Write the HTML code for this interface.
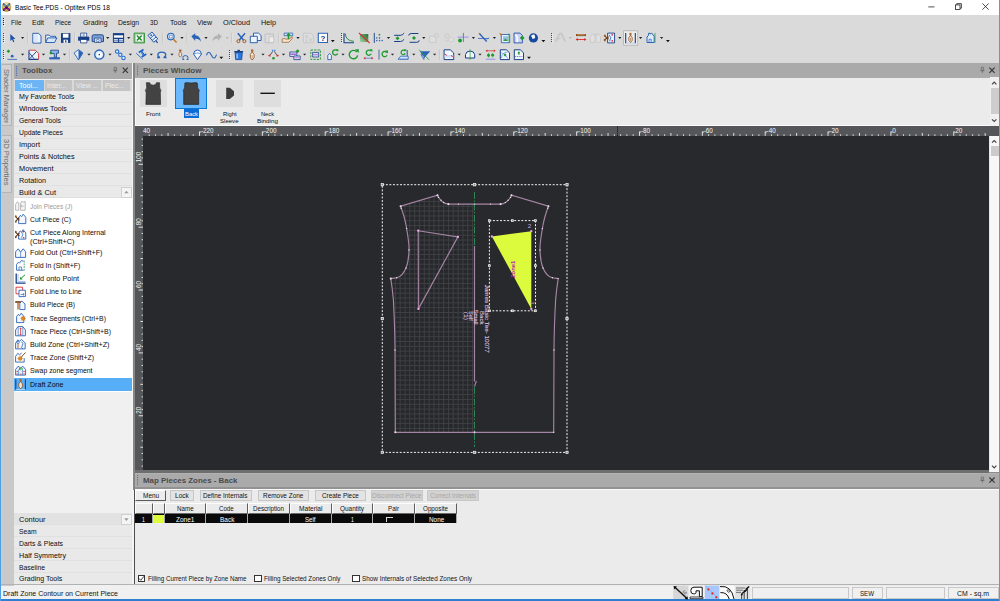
<!DOCTYPE html>
<html lang="en"><head><meta charset="utf-8"><title>Basic Tee.PDS - Optitex PDS 18</title>
<style>
html,body{margin:0;padding:0;background:#ebebeb;}
body{width:1000px;height:601px;position:relative;overflow:hidden;font-family:"Liberation Sans", sans-serif;}
#app{position:absolute;left:0;top:0;width:1000px;height:601px;overflow:hidden;}
#app div{position:absolute;box-sizing:border-box;}
#app span{position:absolute;white-space:nowrap;transform-origin:0 50%;}
#app svg{position:absolute;left:0;top:0;}
</style></head><body><div id="app">
<div style="left:0px;top:0px;width:1000px;height:601px;background:#ebebeb;"></div>
<div style="left:0px;top:0px;width:1000px;height:15px;background:#ffffff;"></div>
<div style="left:0px;top:14.8px;width:1000px;height:48.2px;background:#dadada;"></div>
<svg width="1000" height="601" viewBox="0 0 1000 601" style="pointer-events:none"><defs><radialGradient id="ag" cx="0.5" cy="0.3" r="0.7"><stop offset="0" stop-color="#fbf3d8"/><stop offset="0.55" stop-color="#d9bd6a"/><stop offset="1" stop-color="#a8862e"/></radialGradient></defs><circle cx="6.5" cy="7.05" r="4.8" fill="url(#ag)"/><path d="M3.6 4.2L9.4 10M9.4 4.2L3.6 10" stroke="#3a230f" stroke-width="1.9" stroke-linecap="round"/><path d="M4 4.6L6.3 6.9M9 4.6L6.7 6.9" stroke="#62b4e6" stroke-width="1.3" stroke-linecap="round"/><path d="M6.3 7.4L4 9.7M6.7 7.4L9 9.7" stroke="#a5189a" stroke-width="1.4" stroke-linecap="round"/><circle cx="6.5" cy="7.6" r="1.3" fill="#3a0a5e"/><path d="M928.3 6.9h6.2" stroke="#222" stroke-width="0.8"/><rect x="955.4" y="4.9" width="4.6" height="4.6" fill="none" stroke="#222" stroke-width="0.8"/><path d="M956.8 4.9v-1.3h4.6v4.6h-1.4" fill="none" stroke="#222" stroke-width="0.8"/><path d="M982.4 3.4l6.3 6.3m0-6.3l-6.3 6.3" stroke="#222" stroke-width="0.8"/></svg>
<svg width="1000" height="601" viewBox="0 0 1000 601" font-family="Liberation Sans, sans-serif"><path d="M3.5 33v9" stroke="#4a4a4a" stroke-width="1" stroke-dasharray="1 1"/><path d="M4.5 34v9" stroke="#f6f6f6" stroke-width="1" stroke-dasharray="1 1"/><g transform="translate(12.30 37.90)"><path d="M-2 -4 L-2 3.2 L-0.3 1.6 L1 4.3 L2.1 3.8 L0.9 1.2 L3.2 1.2Z" fill="#1f55a8" /></g><path d="M21.00 37.00h3.2l-1.6 1.9z" fill="#222"/><path d="M28.00 32.699999999999996v10.4" stroke="#a6a6a6" stroke-width="0.6"/><path d="M28.60 32.699999999999996v10.4" stroke="#f4f4f4" stroke-width="0.6"/><g transform="translate(36.80 37.90)"><path d="M-4 -4.6h5.6l2.6 2.4v7.4h-8.2z" fill="#eef4fd" stroke="#1f55a8" stroke-width="0.9" /><path d="M-3 -3.6h4v8h-4z" fill="#dbe8fb" /></g><g transform="translate(51.20 37.90)"><path d="M-5.5 4.6v-7.4h3.6l1 1.2h5.2v1.8" fill="#e9f1fd" stroke="#1f55a8" stroke-width="0.9" /><path d="M-5.5 4.6l2-4.6h9.2l-2.4 4.6z" fill="#d6e6fb" stroke="#1f55a8" stroke-width="0.9" /></g><g transform="translate(65.70 37.90)"><path d="M-4.7 -4.8h9.4v9.8h-9.4z" fill="#163f86" /><path d="M-2.8 -4.2h5.6v4h-5.6z" fill="#fff" /><path d="M-2.2 1.8h4.4v3.2h-4.4z" fill="#fff" /><path d="M-0.6 2.3h1.3v2.4h-1.3z" fill="#163f86" /></g><path d="M74.50 32.699999999999996v10.4" stroke="#a6a6a6" stroke-width="0.6"/><path d="M75.10 32.699999999999996v10.4" stroke="#f4f4f4" stroke-width="0.6"/><g transform="translate(83.70 37.90)"><path d="M-5.6 -1.2h11.2v4h-11.2z" fill="#163f86" /><path d="M-3 -4.8h6v3.8h-6z" fill="#fff" stroke="#163f86" stroke-width="0.8" /><path d="M-3.2 1.6h6.4v3.4h-6.4z" fill="#fff" stroke="#163f86" stroke-width="0.8" /><path d="M-1 -3.6h2M-1 -2.4h2" fill="none" stroke="#163f86" stroke-width="0.5" /><path d="M-5.6 -1.2L0 -5.2L5.6 -1.2" fill="none" stroke="#163f86" stroke-width="0.0" /></g><g transform="translate(97.80 37.90)"><path d="M-5.7 -1.5q0-1.6 1.6-1.6h8.2q1.6 0 1.6 1.6v5.2h-11.4z" fill="#7d9fd6" stroke="#163f86" stroke-width="0.9" /><path d="M-3.2 0.2h6.4v4.4h-6.4z" fill="#e8f0fc" stroke="#163f86" stroke-width="0.7" /><circle cx="0" cy="2.6" r="1.4" fill="none" stroke="#163f86" stroke-width="0.6"/></g><path d="M106.10 37.00h3.2l-1.6 1.9z" fill="#222"/><g transform="translate(118.50 37.90)"><path d="M-5.6 -4.8h11.2v9.8h-11.2z" fill="#163f86" /><path d="M-4.6 -2.6h9.2v2.4h-9.2z" fill="#fff" /><path d="M-4.6 1h4v2.8h-4zM0.6 1h4v2.8h-4z" fill="#dfe9fa" /><path d="M-4.6 2.4h4M0.6 2.4h4" fill="none" stroke="#163f86" stroke-width="0.6" /></g><path d="M127.10 37.00h3.2l-1.6 1.9z" fill="#222"/><g transform="translate(139.30 37.90)"><path d="M-5.2 -4.8h10.4v9.8h-10.4z" fill="#8fc98f" stroke="#2f8f3a" stroke-width="0.9" /><path d="M-3.6 -3.3h7.2v6.8h-7.2z" fill="#fff" /><path d="M-2.4 -2.4L2.4 2.6M2.4 -2.4L-2.4 2.6" fill="none" stroke="#1d8a2b" stroke-width="1.5" /></g><g transform="translate(153.50 37.90)"><g transform="rotate(-40)"><path d="M-2.6 -5.5h5.2v9h-5.2z" fill="#e6effc" stroke="#1f55a8" stroke-width="0.9" /><path d="M-2.6 -1.8h5.2M-2.6 1h5.2" fill="none" stroke="#1f55a8" stroke-width="0.8" /><circle cx="0" cy="-3.6" r="0.9" fill="#1f55a8"/><path d="M0 3.5v3" fill="none" stroke="#163f86" stroke-width="1" /></g></g><path d="M163.00 32.699999999999996v10.4" stroke="#a6a6a6" stroke-width="0.6"/><path d="M163.60 32.699999999999996v10.4" stroke="#f4f4f4" stroke-width="0.6"/><g transform="translate(172.00 37.90)"><circle cx="-1.2" cy="-1.3" r="3.3" fill="#d5e6fb" stroke="#2a63b8" stroke-width="1.1"/><path d="M-2.6 -2.6h2.8v2.6h-2.8z" fill="#fff" stroke="#1f55a8" stroke-width="0.5" /><path d="M1.4 1.3l3.2 3.3" fill="none" stroke="#c8781e" stroke-width="1.6" /></g><path d="M180.40 37.00h3.2l-1.6 1.9z" fill="#222"/><path d="M187.20 32.699999999999996v10.4" stroke="#a6a6a6" stroke-width="0.6"/><path d="M187.80 32.699999999999996v10.4" stroke="#f4f4f4" stroke-width="0.6"/><g transform="translate(196.20 37.90)"><path d="M-4.8 -1.6L-1 -4.6v2q5 0 5.8 6.6q-1.6-3.4-5.8-3.2v2.2z" fill="#2a63b8" /></g><path d="M204.40 37.00h3.2l-1.6 1.9z" fill="#222"/><g transform="translate(217.00 37.90)"><path d="M4.8 -1.6L1 -4.6v2q-5 0-5.8 6.6q1.6-3.4 5.8-3.2v2.2z" fill="#b4b4b4" /></g><path d="M225.60 37.00h3.2l-1.6 1.9z" fill="#b8b8b8"/><path d="M232.00 32.699999999999996v10.4" stroke="#a6a6a6" stroke-width="0.6"/><path d="M232.60 32.699999999999996v10.4" stroke="#f4f4f4" stroke-width="0.6"/><g transform="translate(241.40 37.90)"><path d="M-3.6 -4.6L2 2.2M3.6 -4.6L-2 2.2" fill="none" stroke="#2a63b8" stroke-width="1.5" /><circle cx="-3" cy="3.3" r="1.5" fill="none" stroke="#a5561a" stroke-width="1"/><circle cx="3" cy="3.3" r="1.5" fill="none" stroke="#a5561a" stroke-width="1"/></g><g transform="translate(255.70 37.90)"><path d="M-2.2 -4.8h5l2.6 2.4v5h-7.6z" fill="#eef4fd" stroke="#1f55a8" stroke-width="0.9" /><path d="M-5.4 -1.6h7v6.4h-7z" fill="#eef4fd" stroke="#1f55a8" stroke-width="0.9" /></g><g transform="translate(269.70 37.90)"><path d="M-4.6 -3.8h8.4v8.6h-8.4z" fill="#dcdcdc" stroke="#bdbdbd" stroke-width="0.9" /><path d="M-1.6 -4.8h2.6v1.6h-2.6z" fill="#c9c9c9" /><path d="M-0.6 -1.2h3.4l1.4 1.3v4.6h-4.8z" fill="#ececec" stroke="#bdbdbd" stroke-width="0.7" /></g><path d="M279.00 32.699999999999996v10.4" stroke="#a6a6a6" stroke-width="0.6"/><path d="M279.60 32.699999999999996v10.4" stroke="#f4f4f4" stroke-width="0.6"/><g transform="translate(287.50 37.90)"><path d="M-5.4 1.2q2-1.4 3.6 0h3.4l3-2.4v2l-3.2 3.6h-6.8z" fill="#f4e3cf" stroke="#9a6a3a" stroke-width="0.8" /><path d="M-3.4 -4.8h8.6v2.6h-8.6z" fill="#cfe2fb" stroke="#1f55a8" stroke-width="0.7" /><path d="M0.2 1.2v-3.6h-1.6l2.4-2.8l2.4 2.8h-1.6v3.6z" fill="#1c9a2e" /></g><path d="M296.40 37.00h3.2l-1.6 1.9z" fill="#222"/><g transform="translate(308.40 37.90)"><path d="M-5 -4.6h7.6l2.4 2.2v7.2h-10z" fill="#dedede" stroke="#c4c4c4" stroke-width="0.8" /><path d="M-3.4 -2.6h3.4v2.6h-3.4zM0.6 0.4h3v3h-3zM-3.4 1.4h2.4v2.4h-2.4z" fill="#cfcfcf" /></g><g transform="translate(322.90 37.90)"><path d="M-4.6 -4.6h9.2v9.2h-9.2z" fill="#fff" stroke="#2a63b8" stroke-width="1.1" /><text x="0" y="2.9" font-size="8" font-weight="700" text-anchor="middle" fill="#14387e">?</text></g><path d="M330.90 40.10h3.8l-1.9 2.1z" fill="#111"/><path d="M341.5 33v9" stroke="#4a4a4a" stroke-width="1" stroke-dasharray="1 1"/><path d="M342.5 34v9" stroke="#f6f6f6" stroke-width="1" stroke-dasharray="1 1"/><g transform="translate(349.00 37.90)"><path d="M-5 -4.6v9.4h10" fill="none" stroke="#163f86" stroke-width="1.1" /><path d="M-3.8 -4.4q0.6 7.4 8.6 7.8" fill="none" stroke="#2c8f4a" stroke-width="1" /></g><g transform="translate(364.30 37.90)"><defs><linearGradient id="rg1" x1="0" y1="1" x2="1" y2="0"><stop offset="0" stop-color="#a6d8a6"/><stop offset="1" stop-color="#1d6a2d"/></linearGradient></defs><path d="M-4.4 -3.8h8.4v8h-8.4z" fill="url(#rg1)" /><path d="M-5.4 -5L5.4 5.2" fill="none" stroke="#d92b2b" stroke-width="1.2" /></g><g transform="translate(378.50 37.90)"><path d="M-4.2 -5v10" fill="none" stroke="#163f86" stroke-width="0.9" /><rect x="-2.4" y="-0.6" width="1.3" height="1.3" fill="#2a63b8"/><rect x="-2.4" y="2" width="1.3" height="1.3" fill="#2a63b8"/><rect x="0.4" y="-0.6" width="1.3" height="1.3" fill="#2a63b8"/><rect x="0.4" y="2" width="1.3" height="1.3" fill="#2a63b8"/><rect x="3" y="2" width="1.3" height="1.3" fill="#2a63b8"/><rect x="0.1" y="-4" width="1.6" height="1.6" fill="#1c9a2e"/></g><path d="M386.90 37.00h3.2l-1.6 1.9z" fill="#222"/><g transform="translate(399.50 37.90)"><path d="M-5.4 -2.6h6.4q2 0 3.6-2.2 M-5.4 3.6h6.4q2 0 3.6-2.2" fill="none" stroke="#163f86" stroke-width="1" /><path d="M-2 -1.6l2 2l-2 2l-2-2z" fill="#1c9a2e" /></g><g transform="translate(414.00 37.90)"><path d="M-5.2 -2.4q0-2 2.4-2h7.2 M5.2 2.4q0 2-2.4 2h-7.2" fill="none" stroke="#163f86" stroke-width="1" /><path d="M0 -2l2 2l-2 2l-2-2z" fill="#1c9a2e" /></g><path d="M422.20 37.00h3.2l-1.6 1.9z" fill="#222"/><g transform="translate(434.00 37.90)"><path d="M-4.6 -1.6h5l1.6 1.6v4.6h-6.6z" fill="#dedede" stroke="#c6c6c6" stroke-width="0.8" /><circle cx="2.6" cy="-2.6" r="2" fill="none" stroke="#c6c6c6" stroke-width="0.8"/></g><g transform="translate(448.50 37.90)"><circle cx="-1.4" cy="-2" r="2.2" fill="none" stroke="#c6c6c6" stroke-width="0.8"/><circle cx="2.8" cy="1.8" r="2.2" fill="#e2e2e2" stroke="#c6c6c6" stroke-width="0.8"/><path d="M-3.4 2l1.6 2l1.6-2" fill="none" stroke="#c6c6c6" stroke-width="0.8" /></g><g transform="translate(463.00 37.90)"><path d="M-5.4 -0.8h11" fill="none" stroke="#9a8ff0" stroke-width="1" /><path d="M0.4 -5v9" fill="none" stroke="#2f9a5c" stroke-width="0.9" /><circle cx="-3" cy="2.6" r="1.9" fill="#1c9a2e"/></g><path d="M471.80 37.00h3.2l-1.6 1.9z" fill="#222"/><g transform="translate(483.70 37.90)"><path d="M-5.6 0.6h11" fill="none" stroke="#2a63b8" stroke-width="0.8" /><path d="M-4.6 -4.6L3 3.6" fill="none" stroke="#2a63b8" stroke-width="1.3" /><path d="M-5.2 -5l2.2 0.4l-1.4 1.6z" fill="#c8781e" /><path d="M2 2.6l3.2-3" fill="none" stroke="#2a63b8" stroke-width="0.7" stroke-dasharray="1 0.8"/></g><path d="M492.80 37.00h3.2l-1.6 1.9z" fill="#222"/><g transform="translate(504.70 37.90)"><path d="M-3.4 -3.4h8.4v8.2h-8.4z" fill="#e8f0fc" stroke="#1f55a8" stroke-width="0.8" /><path d="M-1.6 -1.6h5v4.6h-5z" fill="#8fc0e8" /><path d="M-1.6 3l2.2-2.4l2.8 2.4z" fill="#3a9a4a" /><path d="M-5.6 -5l3.2 1l-1.8 1.6z" fill="#c8781e" /><path d="M4.2 -4.6v9.4" fill="none" stroke="#2f9a5c" stroke-width="0.7" /></g><g transform="translate(519.00 37.90)"><path d="M-5 -4.8h6l2.4 2.4v7.4h-8.4z" fill="#cfcff6" stroke="#1f55a8" stroke-width="0.9" /><path d="M-3.6 -3.4q3 3 1.6 7.6" fill="none" stroke="#fff" stroke-width="1.6" /><path d="M3.2 -2.4l2.4 2.4l-2.4 2.4l-2.4-2.4z" fill="#1c9a2e" /></g><g transform="translate(533.40 37.90)"><circle cx="0" cy="0" r="4.6" fill="#174a9e"/><path d="M-2.6 -1.6q1.6-2.6 4-1.6q-0.6 1.6 0.6 2.2q-1 2.4-3.2 1.8q0.4-2-1.4-2.4z" fill="#fff" /></g><path d="M541.50 40.10h3.8l-1.9 2.1z" fill="#111"/><path d="M551.5 33v9" stroke="#4a4a4a" stroke-width="1" stroke-dasharray="1 1"/><path d="M552.5 34v9" stroke="#f6f6f6" stroke-width="1" stroke-dasharray="1 1"/><g transform="translate(560.30 37.90)"><path d="M-4.8 3.6L-0.6 -4.4h1.6l4 8" fill="none" stroke="#c4c4c4" stroke-width="1.6" /><path d="M-2.6 1.4l2.8-1.4" fill="none" stroke="#c4c4c4" stroke-width="1.2" /></g><path d="M568.70 37.00h3.2l-1.6 1.9z" fill="#b8b8b8"/><g transform="translate(581.00 37.90)"><path d="M-5 -2.8h10" fill="none" stroke="#8a4a16" stroke-width="2" /><path d="M-3.8 -3h7.6" fill="none" stroke="#e9c9a0" stroke-width="0.6" /><path d="M-5 1.6h10" fill="none" stroke="#d92b2b" stroke-width="0.9" /><path d="M-5.4 1.6l2.2-1.5v3zM5.4 1.6l-2.2-1.5v3z" fill="#d92b2b" /></g><g transform="translate(595.30 37.90)"><path d="M-5 4.4v-5.6l2.2-3l1.2 1.6l1.2-1.6v8.6z M0.8 4.4v-8.6l1.2 1.6l1.2-1.6l2 3v5.6z" fill="#e0e0e0" stroke="#c6c6c6" stroke-width="0.7" /></g><g transform="translate(609.60 37.90)"><path d="M-2 -4.8h7v9.8h-7z" fill="#e8f0fc" stroke="#163f86" stroke-width="0.9" /><path d="M-0.4 -3q3 2.6 0.4 6.4" fill="none" stroke="#2a63b8" stroke-width="0.8" /><circle cx="2.6" cy="-3" r="0.8" fill="#d92b2b"/><circle cx="2.6" cy="3" r="0.8" fill="#d92b2b"/><path d="M-5.6 -2.4L-1 1.2M-5.6 2.4L-1 -1.2" fill="none" stroke="#7a3e10" stroke-width="1.1" /><circle cx="-4.8" cy="-2.6" r="0.9" fill="#a5561a"/><circle cx="-4.8" cy="2.6" r="0.9" fill="#a5561a"/></g><path d="M618.20 37.00h3.2l-1.6 1.9z" fill="#222"/><g transform="translate(630.50 37.90)"><path d="M-7 -7.2h14.2v14.6h-14.2z" fill="#ececec" stroke="#a9a9a9" stroke-width="0.7" /><path d="M-4.8 -5v10.4M4.8 -5v10.4" fill="none" stroke="#163f86" stroke-width="1.1" /><path d="M-4.8 5.2h9.6" fill="none" stroke="#9fb4d8" stroke-width="0.6" /><path d="M-1 -5h2v2.4h-2z" fill="#b0651c" /><path d="M0 -2.6q2.6 2.2 1.6 5.4l-1.6 1.8l-1.6-1.8q-1-3.2 1.6-5.4z" fill="#f6ead8" stroke="#8a4a16" stroke-width="0.8" /><path d="M0 0v3" fill="none" stroke="#8a4a16" stroke-width="0.5" /></g><path d="M639.00 37.00h3.2l-1.6 1.9z" fill="#222"/><g transform="translate(651.00 37.90)"><path d="M-4 4.6v-5.4l1.6-2v-1.8h1.4v0.8l1.6-1l2.6 3.2v6.2z" fill="#dfeafc" stroke="#2a63b8" stroke-width="1" /><path d="M-2 4.4v-3h2.2v3" fill="none" stroke="#2a63b8" stroke-width="0.7" /><path d="M4 -5v10" fill="none" stroke="#2f9a5c" stroke-width="0.8" /></g><path d="M660.00 37.00h3.2l-1.6 1.9z" fill="#222"/><path d="M666.00 40.10h3.8l-1.9 2.1z" fill="#111"/><path d="M3.5 50v9" stroke="#4a4a4a" stroke-width="1" stroke-dasharray="1 1"/><path d="M4.5 51v9" stroke="#f6f6f6" stroke-width="1" stroke-dasharray="1 1"/><g transform="translate(12.00 54.60)"><path d="M-3.6 -5.2l1.8 1.8l-1.8 1.8l-1.8-1.8z" fill="#1c9a2e" /><circle cx="0.2" cy="1.6" r="1.4" fill="#2a63b8"/><path d="M-4.6 4.8h9.6" fill="none" stroke="#2a63b8" stroke-width="0.8" /></g><path d="M21.00 53.70h3.2l-1.6 1.9z" fill="#222"/><g transform="translate(33.80 54.60)"><path d="M-4.8 -4.4h6.2l3.4 3.2v6h-9.6z" fill="#eef3fb" /><path d="M-4.8 -4.4v9.2h9.6" fill="none" stroke="#163f86" stroke-width="1.1" /><path d="M-4.8 -4.4h6.2l3.4 3.2v6" fill="none" stroke="#e04040" stroke-width="1" /><path d="M-4 4L2.6 -3M-4.4 -1.6l4.6 5.6" fill="none" stroke="#163f86" stroke-width="0.9" /></g><path d="M41.90 53.70h3.2l-1.6 1.9z" fill="#222"/><g transform="translate(54.50 54.60)"><path d="M-5.2 2.6h10.6v2.2h-10.6z" fill="#2a63b8" /><path d="M-3.8 -4.4h7.8v3h-2v4h-2.2v-3.6h-3.6z" fill="#8fb4ea" stroke="#163f86" stroke-width="0.8" /><path d="M-3.6 -3.4l1.7 1.7l-1.7 1.7l-1.7-1.7z" fill="#1c9a2e" /></g><path d="M62.90 53.70h3.2l-1.6 1.9z" fill="#222"/><path d="M69.50 49.4v10.4" stroke="#a6a6a6" stroke-width="0.6"/><path d="M70.10 49.4v10.4" stroke="#f4f4f4" stroke-width="0.6"/><g transform="translate(78.50 54.60)"><path d="M0 -5l4.4 3.4l-4.4 7l-4.4-7z" fill="#e3eefc" stroke="#2a63b8" stroke-width="0.9" /><path d="M0 -5l4.4 3.4l-4.4 7z" fill="#2a63b8" /></g><path d="M87.40 53.70h3.2l-1.6 1.9z" fill="#222"/><g transform="translate(99.30 54.60)"><circle cx="0" cy="0" r="4.6" fill="#dcebfd" stroke="#2a63b8" stroke-width="1.3"/><circle cx="0" cy="0" r="2.6" fill="#fff"/><rect x="-0.7" y="-0.7" width="1.4" height="1.4" fill="#174a9e"/></g><path d="M108.40 53.70h3.2l-1.6 1.9z" fill="#222"/><g transform="translate(120.30 54.60)"><circle cx="-3.2" cy="-3" r="1.7" fill="#e9f1fd" stroke="#2a6fd0" stroke-width="1.1"/><circle cx="0" cy="0.2" r="1.7" fill="#e9f1fd" stroke="#2a6fd0" stroke-width="1.1"/><circle cx="3.2" cy="3.4" r="1.7" fill="#e9f1fd" stroke="#2a6fd0" stroke-width="1.1"/></g><path d="M128.80 53.70h3.2l-1.6 1.9z" fill="#222"/><g transform="translate(141.00 54.60)"><path d="M-4.8 -1.4L1.6 4.6" fill="none" stroke="#2a63b8" stroke-width="0.9" /><g transform="translate(1.6 -1.2) rotate(-32)"><path d="M-2.8 -3.6h5.6v1.7h-1.7v3.6h1.7v1.7h-5.6v-1.7h1.7v-3.6h-1.7z" fill="#1f63c8" /><path d="M-0.3 -1.8v3.4" fill="none" stroke="#7fb2f0" stroke-width="0.6" /></g></g><path d="M149.70 53.70h3.2l-1.6 1.9z" fill="#222"/><g transform="translate(161.80 54.60)"><path d="M-4.8 2.9h3q-2.4-1.1-2.2-3q0.4-2.4 4-2.4q3.6 0 4 2.4q0.2 1.9-2.2 3h3" fill="none" stroke="#2a63b8" stroke-width="1.3" /></g><path d="M170.40 53.70h3.2l-1.6 1.9z" fill="#222"/><g transform="translate(182.80 54.60)"><path d="M-3.6 -5h2.2v2h-2.2z" fill="#a5561a" /><path d="M-2.5 -3q2 1.8 1.2 4.2l-1.2 1.4l-1.2-1.4q-0.8-2.4 1.2-4.2z" fill="#f6ead8" stroke="#8a4a16" stroke-width="0.7" /><path d="M-0.6 4.8h1.8q-1.4-1-1.2-2.2q0.2-1.6 2.6-1.6q2.4 0 2.6 1.6q0.2 1.2-1.2 2.2h1.8" fill="none" stroke="#2a63b8" stroke-width="1" /></g><g transform="translate(197.50 54.60)"><path d="M0 5l-4-5.6q0.6-4 4-4q3.4 0 4 4z" fill="#f2f6fd" stroke="#2a63b8" stroke-width="1" /><path d="M-4 -0.6q4-2.2 8 0" fill="none" stroke="#2a63b8" stroke-width="0.6" /></g><g transform="translate(211.60 54.60)"><path d="M-5.2 0.6q2.2-6 5 0q2.8 6 5.2-0.6" fill="none" stroke="#2a63b8" stroke-width="1.1" /></g><path d="M219.40 56.80h3.8l-1.9 2.1z" fill="#111"/><path d="M229.5 50v9" stroke="#4a4a4a" stroke-width="1" stroke-dasharray="1 1"/><path d="M230.5 51v9" stroke="#f6f6f6" stroke-width="1" stroke-dasharray="1 1"/><g transform="translate(238.70 54.60)"><path d="M-3.6 -2.2h7.2l-0.6 7.2h-6z" fill="#2a78e0" stroke="#163f86" stroke-width="0.8" /><path d="M-4.4 -3.6h8.8v1.4h-8.8z" fill="#163f86" /><path d="M-1.2 -4.8h2.4v1.2h-2.4z" fill="#163f86" /><path d="M-1.6 -0.8v4.6" fill="none" stroke="#bcd8fb" stroke-width="1.2" /></g><g transform="translate(252.20 54.60)"><path d="M-1.1 -5.2h2.2v2.4h-2.2z" fill="#b0651c" /><path d="M0 -2.8q3 2.4 1.8 6l-1.8 2.2l-1.8-2.2q-1.2-3.6 1.8-6z" fill="#f6ead8" stroke="#8a4a16" stroke-width="0.8" /><path d="M0 0.4v3.4" fill="none" stroke="#8a4a16" stroke-width="0.5" /></g><path d="M261.40 53.70h3.2l-1.6 1.9z" fill="#222"/><g transform="translate(273.50 54.60)"><path d="M-1.6 -4.8h1.4v1.4h-1.4zM0.6 -4.8h1.4v1.4h-1.4z" fill="#4a86e8" /><path d="M-0.8 -3.2L-3.6 1M0.8 -3.2L3.6 1" fill="none" stroke="#222" stroke-width="0.7" /><path d="M-5.6 1l2.4-1.4v2.8zM5.6 1l-2.4-1.4v2.8z" fill="#e03030" /><circle cx="0" cy="3.6" r="1.3" fill="#1c9a2e"/></g><path d="M281.90 53.70h3.2l-1.6 1.9z" fill="#222"/><g transform="translate(295.00 54.60)"><path d="M-5.2 -2.6h7v4.4h-7z" fill="#e8f0fc" stroke="#163f86" stroke-width="0.8" /><path d="M-5 -1.2h6.6v1.6h-6.6z" fill="#a070d8" /><path d="M-1.2 1.4h6.4v3.6h-6.4z" fill="#e8f0fc" stroke="#163f86" stroke-width="0.8" /><path d="M-1 2.4h6v1.4h-6z" fill="#c89ae8" /><path d="M2.6 -5.4l1.9 1.9l-1.9 1.9l-1.9-1.9z" fill="#1c9a2e" /></g><path d="M303.00 53.70h3.2l-1.6 1.9z" fill="#222"/><g transform="translate(315.60 54.60)"><path d="M-4.8 -4.6h9.6v9.4h-9.6z" fill="none" stroke="#2c9a3a" stroke-width="1" stroke-dasharray="2.2 1.2"/><path d="M-3 -2.2h6v4.6h-6z" fill="#e8f0fc" stroke="#163f86" stroke-width="0.8" /><path d="M-2.8 -0.8h5.6v1.6h-5.6z" fill="#b08ae0" /></g><path d="M324.40 49.4v10.4" stroke="#a6a6a6" stroke-width="0.6"/><path d="M325.00 49.4v10.4" stroke="#f4f4f4" stroke-width="0.6"/><g transform="translate(332.80 54.60)"><path d="M-5 5v-4.2l1.8-2l1.8 2v4.2z" fill="#eef3fb" stroke="#2a63b8" stroke-width="0.9" /><path d="M4.6 -3.6a2.6 2.6 0 1 0 0.2 2.4" fill="none" stroke="#1c9a2e" stroke-width="1.3" /><path d="M3 -5.4h2.6v2.6z" fill="#1c9a2e" /></g><path d="M341.40 53.70h3.2l-1.6 1.9z" fill="#222"/><g transform="translate(353.40 54.60)"><path d="M3.4 -2.6a4.2 4.2 0 1 0 0.8 3.4" fill="none" stroke="#1c9a2e" stroke-width="1.4" /><path d="M1.6 -5.4h3.8v3.8z" fill="#1c9a2e" /></g><g transform="translate(368.40 54.60)"><path d="M2.6 -3.4a2.6 2.6 0 1 0 0.2 2.6" fill="none" stroke="#1c9a2e" stroke-width="1.3" /><path d="M1.2 -5.4h2.8v2.8z" fill="#1c9a2e" /><path d="M-4.2 3.6h8.4" fill="none" stroke="#6a8fd8" stroke-width="1" /><path d="M-5 3.6l2-1.4v2.8zM5 3.6l-2-1.4v2.8z" fill="#e03030" /></g><g transform="translate(383.00 54.60)"><path d="M-4 -5v10" fill="none" stroke="#4a6aa8" stroke-width="1" /><path d="M3.8 -2a2.6 2.6 0 1 0 0.2 2.6" fill="none" stroke="#1c9a2e" stroke-width="1.3" /><path d="M2.2 -4h2.8v2.8z" fill="#1c9a2e" /></g><path d="M390.90 53.70h3.2l-1.6 1.9z" fill="#222"/><g transform="translate(403.40 54.60)"><path d="M-5.2 4.6l2.4-3h7.6v3z" fill="#cfe2fb" stroke="#2a63b8" stroke-width="0.8" /><path d="M3.8 -4.6v6" fill="none" stroke="#2a63b8" stroke-width="1.1" /><path d="M1.6 -3.6a2.2 2.2 0 1 0 0.2 2.4" fill="none" stroke="#1c9a2e" stroke-width="1.2" /><path d="M0.4 -5.4h2.4v2.4z" fill="#1c9a2e" /><path d="M-5.2 4.8h10" fill="none" stroke="#2a63b8" stroke-width="0.6" stroke-dasharray="1 0.8"/></g><path d="M412.20 53.70h3.2l-1.6 1.9z" fill="#222"/><g transform="translate(424.50 54.60)"><path d="M-4.6 -3.4h10.4L-0.6 3.6z" fill="#2a63b8" /><path d="M-3.6 0L-0.6 5l0.2-4z" fill="#8fc0f0" stroke="#1f55a8" stroke-width="0.6" /><path d="M-5.4 -4.8L4.6 5.2" fill="none" stroke="#2c9a3a" stroke-width="0.9" /></g><path d="M433.00 53.70h3.2l-1.6 1.9z" fill="#222"/><path d="M440.00 49.4v10.4" stroke="#a6a6a6" stroke-width="0.6"/><path d="M440.60 49.4v10.4" stroke="#f4f4f4" stroke-width="0.6"/><g transform="translate(448.90 54.60)"><path d="M-4.8 -4.8h6.2l3.4 3.2v6.6h-9.6z" fill="#f4f8fe" stroke="#163f86" stroke-width="1" /><path d="M-4.4 0.4h8.8v2.6h-8.8z" fill="#cfe2fb" /><path d="M-4 -0.4l2 1.2M4 2l-2-1.2" fill="none" stroke="#e03030" stroke-width="1" /></g><path d="M457.60 53.70h3.2l-1.6 1.9z" fill="#222"/><g transform="translate(470.10 54.60)"><path d="M-4.6 3.4v-3.4q0.6-3.4 4.6-3.6q4 0.2 4.6 3.6v3.4z" fill="#f2f6fd" stroke="#163f86" stroke-width="1" /><path d="M0 -5.4v10.6" fill="none" stroke="#2c9a3a" stroke-width="0.7" /></g><path d="M478.40 53.70h3.2l-1.6 1.9z" fill="#222"/><g transform="translate(490.60 54.60)"><path d="M-4.6 -3.8h9.2" fill="none" stroke="#d92b2b" stroke-width="0.7" /><path d="M-5 -3.8l1.8-1.2v2.4zM5 -3.8l-1.8-1.2v2.4z" fill="#d92b2b" /><path d="M-4.8 4.6h9.6" fill="none" stroke="#9a8ff0" stroke-width="1" /><path d="M-3.8 0.6l2-2.6v1.6h1.2v2.2h-1.2v1.6zM3.8 0.6l-2 2.6v-1.6h-1.2v-2.2h1.2v-1.6z" fill="#1c9a2e" /></g><g transform="translate(504.90 54.60)"><path d="M-4.6 -4.8h6l3.2 3v6.8h-9.2z" fill="#f4f8fe" stroke="#163f86" stroke-width="1" /><path d="M-3.4 3.4q0.4-5.6 6-6" fill="none" stroke="#6a9ae0" stroke-width="0.8" /><path d="M-3.6 -2q4.6 1 6.4 6" fill="none" stroke="#6a9ae0" stroke-width="0.8" /><path d="M0.2 -1.4l1.4 1.8l-1.4 1.8l-1.4-1.8z" fill="#1c9a2e" /></g><g transform="translate(518.90 54.60)"><path d="M-4.6 -4.8h6l3.2 3v6.8h-9.2z" fill="#f4f8fe" stroke="#163f86" stroke-width="1" /><path d="M-3.8 2h7.6" fill="none" stroke="#163f86" stroke-width="0.7" stroke-dasharray="1 0.8"/><path d="M0 -3.4l1.6 2h-1v1.6h-1.2v-1.6h-1z" fill="#1c9a2e" /></g><path d="M527.10 56.80h3.8l-1.9 2.1z" fill="#111"/></svg>
<div style="left:0px;top:63px;width:14px;height:523px;background:#c9c9c9;"></div>
<div style="left:1.5px;top:64.2px;width:10px;height:62.2px;background:#d2d2d2;border:0.5px solid #b4b4b4;border-left:none;"></div>
<div style="left:1.5px;top:134.9px;width:10px;height:58.2px;background:#d2d2d2;border:0.5px solid #b4b4b4;border-left:none;"></div>
<div style="left:14px;top:63px;width:118.5px;height:523px;background:#f0f0f0;"></div>
<div style="left:14px;top:62.8px;width:118.2px;height:16.4px;background:#aaaaaa;"></div>
<div style="left:14px;top:79.5px;width:118.5px;height:11.5px;background:#d9d9d9;"></div>
<div style="left:15px;top:80px;width:28.5px;height:10.5px;background:#6cb4f4;"></div>
<div style="left:44.6px;top:80px;width:27.4px;height:10.5px;background:#c4c4c4;"></div>
<div style="left:73.6px;top:80px;width:27.400000000000006px;height:10.5px;background:#c4c4c4;"></div>
<div style="left:102.6px;top:80px;width:27.400000000000006px;height:10.5px;background:#c4c4c4;"></div>
<div style="left:14px;top:91.0px;width:118.5px;height:11.9px;background:#e9e9e9;border-bottom:1px solid #e0e0e0;"></div>
<div style="left:14px;top:102.9px;width:118.5px;height:11.9px;background:#e9e9e9;border-bottom:1px solid #e0e0e0;"></div>
<div style="left:14px;top:114.8px;width:118.5px;height:11.9px;background:#e9e9e9;border-bottom:1px solid #e0e0e0;"></div>
<div style="left:14px;top:126.7px;width:118.5px;height:11.9px;background:#e9e9e9;border-bottom:1px solid #e0e0e0;"></div>
<div style="left:14px;top:138.6px;width:118.5px;height:11.9px;background:#e9e9e9;border-bottom:1px solid #e0e0e0;"></div>
<div style="left:14px;top:150.5px;width:118.5px;height:11.9px;background:#e9e9e9;border-bottom:1px solid #e0e0e0;"></div>
<div style="left:14px;top:162.4px;width:118.5px;height:11.9px;background:#e9e9e9;border-bottom:1px solid #e0e0e0;"></div>
<div style="left:14px;top:174.3px;width:118.5px;height:11.9px;background:#e9e9e9;border-bottom:1px solid #e0e0e0;"></div>
<div style="left:14px;top:186.2px;width:118.5px;height:11.9px;background:#e9e9e9;border-bottom:1px solid #e0e0e0;"></div>
<div style="left:120.5px;top:186.5px;width:11.5px;height:11px;background:#f4f4f4;border:0.5px solid #d0d0d0;"></div>
<div style="left:14px;top:198px;width:118.5px;height:194px;background:#ffffff;"></div>
<div style="left:14px;top:378px;width:118.3px;height:12.6px;background:#55aef6;"></div>
<div style="left:14px;top:513.3px;width:118.5px;height:11.95px;background:#e2e2e2;border-bottom:1px solid #e0e0e0;"></div>
<div style="left:14px;top:525.25px;width:118.5px;height:11.95px;background:#e9e9e9;border-bottom:1px solid #e0e0e0;"></div>
<div style="left:14px;top:537.1999999999999px;width:118.5px;height:11.95px;background:#e9e9e9;border-bottom:1px solid #e0e0e0;"></div>
<div style="left:14px;top:549.15px;width:118.5px;height:11.95px;background:#e9e9e9;border-bottom:1px solid #e0e0e0;"></div>
<div style="left:14px;top:561.0999999999999px;width:118.5px;height:11.95px;background:#e9e9e9;border-bottom:1px solid #e0e0e0;"></div>
<div style="left:14px;top:573.05px;width:118.5px;height:11.95px;background:#e9e9e9;border-bottom:1px solid #e0e0e0;"></div>
<div style="left:120.5px;top:513.8px;width:11.5px;height:11px;background:#f4f4f4;border:0.5px solid #d0d0d0;"></div>
<div style="left:132.2px;top:63px;width:1.2px;height:522px;background:#f6f6f6;"></div>
<div style="left:133.3px;top:63px;width:1.5px;height:522px;background:#858585;"></div>
<div style="left:134.8px;top:62.8px;width:865.2px;height:15.2px;background:#aaaaaa;"></div>
<div style="left:134.8px;top:78px;width:865.2px;height:48.2px;background:#ebebeb;"></div>
<div style="left:134.8px;top:78px;width:1px;height:48.2px;background:#f8f8f8;"></div>
<div style="left:134.8px;top:125.3px;width:865.2px;height:0.9px;background:#fbfbfb;"></div>
<div style="left:139.6px;top:80px;width:27.4px;height:26.8px;background:#dedede;"></div>
<div style="left:175.1px;top:78px;width:32px;height:31.4px;background:#6ab8fe;border:1.1px solid #0a78d7;"></div>
<div style="left:216px;top:80px;width:27.2px;height:26.8px;background:#dedede;"></div>
<div style="left:254px;top:80px;width:27.2px;height:26.8px;background:#dedede;"></div>
<div style="left:184px;top:109.3px;width:15px;height:8.8px;background:#0c6cd6;"></div>
<div style="left:989.5px;top:77.3px;width:10.5px;height:49px;background:#f0f0f0;"></div>
<div style="left:990.5px;top:88px;width:8.5px;height:25.5px;background:#cdcdcd;"></div>
<div style="left:134.7px;top:126px;width:865.3px;height:344.3px;background:#28292c;"></div>
<div style="left:134.7px;top:126.2px;width:865px;height:10px;background:#55565a;"></div>
<div style="left:134.7px;top:126px;width:8.6px;height:344.5px;background:#55565a;"></div>
<div style="left:988.8px;top:136.2px;width:10.4px;height:335.4px;background:#f7f7f7;"></div>
<div style="left:988.8px;top:136.2px;width:1.3px;height:335.4px;background:#e6e6e6;"></div>
<div style="left:990.8px;top:146.4px;width:7.8px;height:9.3px;background:#cbcbcb;"></div>
<svg width="1000" height="601" viewBox="0 0 1000 601" font-family="Liberation Sans, sans-serif"><path d="M149.22 134.3V135.9M155.50 134.3V135.9M161.79 134.3V135.9M168.07 133V135.9M174.36 134.3V135.9M180.65 134.3V135.9M186.93 134.3V135.9M193.22 134.3V135.9M199.50 131.6V135.9 M199.50 132h1.7M205.79 134.3V135.9M212.07 134.3V135.9M218.36 134.3V135.9M224.64 134.3V135.9M230.93 133V135.9M237.21 134.3V135.9M243.50 134.3V135.9M249.79 134.3V135.9M256.07 134.3V135.9M262.36 131.6V135.9 M262.36 132h1.7M268.64 134.3V135.9M274.93 134.3V135.9M281.21 134.3V135.9M287.50 134.3V135.9M293.78 133V135.9M300.07 134.3V135.9M306.35 134.3V135.9M312.64 134.3V135.9M318.92 134.3V135.9M325.21 131.6V135.9 M325.21 132h1.7M331.50 134.3V135.9M337.78 134.3V135.9M344.07 134.3V135.9M350.35 134.3V135.9M356.64 133V135.9M362.92 134.3V135.9M369.21 134.3V135.9M375.49 134.3V135.9M381.78 134.3V135.9M388.06 131.6V135.9 M388.06 132h1.7M394.35 134.3V135.9M400.63 134.3V135.9M406.92 134.3V135.9M413.21 134.3V135.9M419.49 133V135.9M425.78 134.3V135.9M432.06 134.3V135.9M438.35 134.3V135.9M444.63 134.3V135.9M450.92 131.6V135.9 M450.92 132h1.7M457.20 134.3V135.9M463.49 134.3V135.9M469.77 134.3V135.9M476.06 134.3V135.9M482.34 133V135.9M488.63 134.3V135.9M494.92 134.3V135.9M501.20 134.3V135.9M507.49 134.3V135.9M513.77 131.6V135.9 M513.77 132h1.7M520.06 134.3V135.9M526.34 134.3V135.9M532.63 134.3V135.9M538.91 134.3V135.9M545.20 133V135.9M551.48 134.3V135.9M557.77 134.3V135.9M564.06 134.3V135.9M570.34 134.3V135.9M576.63 131.6V135.9 M576.63 132h1.7M582.91 134.3V135.9M589.20 134.3V135.9M595.48 134.3V135.9M601.77 134.3V135.9M608.05 133V135.9M614.34 134.3V135.9M620.62 134.3V135.9M626.91 134.3V135.9M633.19 134.3V135.9M639.48 131.6V135.9 M639.48 132h1.7M645.77 134.3V135.9M652.05 134.3V135.9M658.34 134.3V135.9M664.62 134.3V135.9M670.91 133V135.9M677.19 134.3V135.9M683.48 134.3V135.9M689.76 134.3V135.9M696.05 134.3V135.9M702.33 131.6V135.9 M702.33 132h1.7M708.62 134.3V135.9M714.90 134.3V135.9M721.19 134.3V135.9M727.48 134.3V135.9M733.76 133V135.9M740.05 134.3V135.9M746.33 134.3V135.9M752.62 134.3V135.9M758.90 134.3V135.9M765.19 131.6V135.9 M765.19 132h1.7M771.47 134.3V135.9M777.76 134.3V135.9M784.04 134.3V135.9M790.33 134.3V135.9M796.62 133V135.9M802.90 134.3V135.9M809.19 134.3V135.9M815.47 134.3V135.9M821.76 134.3V135.9M828.04 131.6V135.9 M828.04 132h1.7M834.33 134.3V135.9M840.61 134.3V135.9M846.90 134.3V135.9M853.18 134.3V135.9M859.47 133V135.9M865.75 134.3V135.9M872.04 134.3V135.9M878.33 134.3V135.9M884.61 134.3V135.9M890.90 131.6V135.9 M890.90 132h1.7M897.18 134.3V135.9M903.47 134.3V135.9M909.75 134.3V135.9M916.04 134.3V135.9M922.32 133V135.9M928.61 134.3V135.9M934.89 134.3V135.9M941.18 134.3V135.9M947.46 134.3V135.9M953.75 131.6V135.9 M953.75 132h1.7M960.04 134.3V135.9M966.32 134.3V135.9M972.61 134.3V135.9M978.89 134.3V135.9M985.18 133V135.9" stroke="#f0f0f0" stroke-width="0.9" fill="none"/><text x="200.90" y="133.2" font-size="6.5" fill="#f6f6f6" textLength="12.7" lengthAdjust="spacingAndGlyphs">-220</text><text x="263.76" y="133.2" font-size="6.5" fill="#f6f6f6" textLength="12.7" lengthAdjust="spacingAndGlyphs">-200</text><text x="326.61" y="133.2" font-size="6.5" fill="#f6f6f6" textLength="12.7" lengthAdjust="spacingAndGlyphs">-180</text><text x="389.46" y="133.2" font-size="6.5" fill="#f6f6f6" textLength="12.7" lengthAdjust="spacingAndGlyphs">-160</text><text x="452.32" y="133.2" font-size="6.5" fill="#f6f6f6" textLength="12.7" lengthAdjust="spacingAndGlyphs">-140</text><text x="515.17" y="133.2" font-size="6.5" fill="#f6f6f6" textLength="12.7" lengthAdjust="spacingAndGlyphs">-120</text><text x="578.03" y="133.2" font-size="6.5" fill="#f6f6f6" textLength="12.7" lengthAdjust="spacingAndGlyphs">-100</text><text x="640.88" y="133.2" font-size="6.5" fill="#f6f6f6" textLength="9.2" lengthAdjust="spacingAndGlyphs">-80</text><text x="703.73" y="133.2" font-size="6.5" fill="#f6f6f6" textLength="9.2" lengthAdjust="spacingAndGlyphs">-60</text><text x="766.59" y="133.2" font-size="6.5" fill="#f6f6f6" textLength="9.2" lengthAdjust="spacingAndGlyphs">-40</text><text x="829.44" y="133.2" font-size="6.5" fill="#f6f6f6" textLength="9.2" lengthAdjust="spacingAndGlyphs">-20</text><text x="892.30" y="133.2" font-size="6.5" fill="#f6f6f6" textLength="3.6" lengthAdjust="spacingAndGlyphs">0</text><text x="955.15" y="133.2" font-size="6.5" fill="#f6f6f6" textLength="7.2" lengthAdjust="spacingAndGlyphs">20</text><text x="142.9" y="133.2" font-size="6.5" fill="#f6f6f6" textLength="7.3" lengthAdjust="spacingAndGlyphs">40</text><path d="M617.5 126.4V136" stroke="#0a0a0a" stroke-width="0.9" stroke-dasharray="1.2 0.9"/><path d="M141.6 139.15H143M141.6 145.44H143M141.6 151.73H143M141.6 158.01H143M138.6 164.30H143M141.6 170.59H143M141.6 176.87H143M141.6 183.16H143M141.6 189.45H143M140.4 195.74H143M141.6 202.02H143M141.6 208.31H143M141.6 214.60H143M141.6 220.88H143M138.6 227.17H143M141.6 233.46H143M141.6 239.74H143M141.6 246.03H143M141.6 252.32H143M140.4 258.61H143M141.6 264.89H143M141.6 271.18H143M141.6 277.47H143M141.6 283.75H143M138.6 290.04H143M141.6 296.33H143M141.6 302.61H143M141.6 308.90H143M141.6 315.19H143M140.4 321.48H143M141.6 327.76H143M141.6 334.05H143M141.6 340.34H143M141.6 346.62H143M138.6 352.91H143M141.6 359.20H143M141.6 365.48H143M141.6 371.77H143M141.6 378.06H143M140.4 384.35H143M141.6 390.63H143M141.6 396.92H143M141.6 403.21H143M141.6 409.49H143M138.6 415.78H143M141.6 422.07H143M141.6 428.35H143M141.6 434.64H143M141.6 440.93H143M140.4 447.22H143M141.6 453.50H143M141.6 459.79H143M141.6 466.08H143" stroke="#f0f0f0" stroke-width="0.9" fill="none"/><text transform="translate(140.6 162.30) rotate(-90)" font-size="6.4" fill="#f6f6f6" textLength="10.5" lengthAdjust="spacingAndGlyphs">100</text><text transform="translate(140.6 225.17) rotate(-90)" font-size="6.4" fill="#f6f6f6" textLength="7.0" lengthAdjust="spacingAndGlyphs">80</text><text transform="translate(140.6 288.04) rotate(-90)" font-size="6.4" fill="#f6f6f6" textLength="7.0" lengthAdjust="spacingAndGlyphs">60</text><text transform="translate(140.6 350.91) rotate(-90)" font-size="6.4" fill="#f6f6f6" textLength="7.0" lengthAdjust="spacingAndGlyphs">40</text><text transform="translate(140.6 413.78) rotate(-90)" font-size="6.4" fill="#f6f6f6" textLength="7.0" lengthAdjust="spacingAndGlyphs">20</text><defs><pattern id="gr" x="472.1" y="341.0" width="4.83" height="4.83" patternUnits="userSpaceOnUse"><rect width="4.83" height="4.83" fill="#27282b"/><path d="M0 0.5H4.83M0.5 0V4.83" stroke="#3e3f42" stroke-width="1"/></pattern></defs><path d="M474.5 204.1 L448.4 204.1 C443.5 203.8 440.5 201.5 437.5 195.3 L400.6 206.2 C403.5 214 405.6 221 406.6 228.5 C408 237 409.2 243 409 250 C408.8 258 408 263 406 268 C403.5 274 400.5 277 396.6 277.8 L390.8 278.6 C392 286 392.8 293 393.4 300 C394.3 317 394.9 333 395 350 L395.3 432.3 L474.5 432.3 Z" fill="url(#gr)"/><g fill="none" stroke="#a585a5" stroke-width="1.15"><path d="M474.5 204.1 L448.4 204.1 C443.5 203.8 440.5 201.5 437.5 195.3 L400.6 206.2 C403.5 214 405.6 221 406.6 228.5 C408 237 409.2 243 409 250 C408.8 258 408 263 406 268 C403.5 274 400.5 277 396.6 277.8 L390.8 278.6 C392 286 392.8 293 393.4 300 C394.3 317 394.9 333 395 350 L395.3 432.3 L474.5 432.3"/><path d="M474.5 204.1 L448.4 204.1 C443.5 203.8 440.5 201.5 437.5 195.3 L400.6 206.2 C403.5 214 405.6 221 406.6 228.5 C408 237 409.2 243 409 250 C408.8 258 408 263 406 268 C403.5 274 400.5 277 396.6 277.8 L390.8 278.6 C392 286 392.8 293 393.4 300 C394.3 317 394.9 333 395 350 L395.3 432.3 L474.5 432.3" transform="translate(949 0) scale(-1 1)"/><path d="M474.5 246V381.5 M474.5 386.5l1.9-5.6"/><path d="M418.2 230.7L457.9 236.9L418.4 308.9Z"/></g><path d="M474.5 192V246" stroke="#2f9a5c" stroke-width="0.8" stroke-dasharray="7 1.5 1.5 1.5" fill="none"/><path d="M474.5 387V447" stroke="#2f9a5c" stroke-width="0.8" stroke-dasharray="7 1.5 1.5 1.5" fill="none"/><circle cx="438.4" cy="197.4" r="0.7" fill="#e9dfe9"/><circle cx="510.6" cy="197.4" r="0.7" fill="#e9dfe9"/><circle cx="401.2" cy="208.2" r="0.7" fill="#e9dfe9"/><circle cx="547.8" cy="208.2" r="0.7" fill="#e9dfe9"/><circle cx="441.0" cy="200.2" r="0.7" fill="#e9dfe9"/><circle cx="508.0" cy="200.2" r="0.7" fill="#e9dfe9"/><circle cx="443.6" cy="202.4" r="0.7" fill="#e9dfe9"/><circle cx="505.4" cy="202.4" r="0.7" fill="#e9dfe9"/><circle cx="437.5" cy="195.3" r="1.05" fill="#e9dfe9"/><circle cx="511.5" cy="195.3" r="1.05" fill="#e9dfe9"/><circle cx="400.6" cy="206.2" r="1.05" fill="#e9dfe9"/><circle cx="548.4" cy="206.2" r="1.05" fill="#e9dfe9"/><circle cx="448.4" cy="204.1" r="1.05" fill="#e9dfe9"/><circle cx="500.6" cy="204.1" r="1.05" fill="#e9dfe9"/><circle cx="458.5" cy="204.1" r="0.7" fill="#e9dfe9"/><circle cx="490.5" cy="204.1" r="0.7" fill="#e9dfe9"/><circle cx="474.5" cy="204.1" r="0.7" fill="#e9dfe9"/><circle cx="406.6" cy="228.5" r="0.7" fill="#e9dfe9"/><circle cx="542.4" cy="228.5" r="0.7" fill="#e9dfe9"/><circle cx="409.0" cy="250.0" r="0.7" fill="#e9dfe9"/><circle cx="540.0" cy="250.0" r="0.7" fill="#e9dfe9"/><circle cx="406.0" cy="268.0" r="0.7" fill="#e9dfe9"/><circle cx="543.0" cy="268.0" r="0.7" fill="#e9dfe9"/><circle cx="396.6" cy="277.8" r="0.7" fill="#e9dfe9"/><circle cx="552.4" cy="277.8" r="0.7" fill="#e9dfe9"/><circle cx="390.8" cy="278.6" r="1.05" fill="#e9dfe9"/><circle cx="558.2" cy="278.6" r="0.7" fill="#e9dfe9"/><circle cx="395.0" cy="350.0" r="0.7" fill="#e9dfe9"/><circle cx="554.0" cy="350.0" r="0.7" fill="#e9dfe9"/><circle cx="395.3" cy="432.3" r="1.05" fill="#e9dfe9"/><circle cx="553.7" cy="432.3" r="0.7" fill="#e9dfe9"/><circle cx="474.5" cy="432.3" r="1.1" fill="#f3a6f0"/><circle cx="418.2" cy="230.7" r="1.15" fill="#f3a6f0"/><circle cx="457.9" cy="236.9" r="1.15" fill="#f3a6f0"/><circle cx="418.4" cy="308.9" r="1.15" fill="#f3a6f0"/><path d="M491.9 236.5L531.3 231.2L531.3 308.9Z" fill="#dcfb3c"/><circle cx="491.9" cy="236.5" r="1.15" fill="#f3a6f0"/><circle cx="531.3" cy="231.2" r="1.15" fill="#f3a6f0"/><circle cx="531.3" cy="308.9" r="1.15" fill="#f3a6f0"/><rect x="382.3" y="184.7" width="184.7" height="267.7" fill="none" stroke="#f6f6f6" stroke-width="1" stroke-dasharray="1.95 1.6"/><rect x="381.15" y="183.55" width="2.3" height="2.3" fill="#8a8a8a" stroke="#f6f6f6" stroke-width="0.7"/><rect x="473.50" y="183.55" width="2.3" height="2.3" fill="#8a8a8a" stroke="#f6f6f6" stroke-width="0.7"/><rect x="565.85" y="183.55" width="2.3" height="2.3" fill="#8a8a8a" stroke="#f6f6f6" stroke-width="0.7"/><rect x="381.15" y="317.40" width="2.3" height="2.3" fill="#8a8a8a" stroke="#f6f6f6" stroke-width="0.7"/><rect x="565.85" y="317.40" width="2.3" height="2.3" fill="#8a8a8a" stroke="#f6f6f6" stroke-width="0.7"/><rect x="381.15" y="451.25" width="2.3" height="2.3" fill="#8a8a8a" stroke="#f6f6f6" stroke-width="0.7"/><rect x="473.50" y="451.25" width="2.3" height="2.3" fill="#8a8a8a" stroke="#f6f6f6" stroke-width="0.7"/><rect x="565.85" y="451.25" width="2.3" height="2.3" fill="#8a8a8a" stroke="#f6f6f6" stroke-width="0.7"/><rect x="489.4" y="220.6" width="46.10000000000002" height="90.20000000000002" fill="none" stroke="#f6f6f6" stroke-width="1" stroke-dasharray="1.95 1.6"/><rect x="488.50" y="219.70" width="1.8" height="1.8" fill="#8a8a8a" stroke="#f6f6f6" stroke-width="0.7"/><rect x="511.55" y="219.70" width="1.8" height="1.8" fill="#8a8a8a" stroke="#f6f6f6" stroke-width="0.7"/><rect x="534.60" y="219.70" width="1.8" height="1.8" fill="#8a8a8a" stroke="#f6f6f6" stroke-width="0.7"/><rect x="488.50" y="264.80" width="1.8" height="1.8" fill="#8a8a8a" stroke="#f6f6f6" stroke-width="0.7"/><rect x="534.60" y="264.80" width="1.8" height="1.8" fill="#8a8a8a" stroke="#f6f6f6" stroke-width="0.7"/><rect x="488.50" y="309.90" width="1.8" height="1.8" fill="#8a8a8a" stroke="#f6f6f6" stroke-width="0.7"/><rect x="511.55" y="309.90" width="1.8" height="1.8" fill="#8a8a8a" stroke="#f6f6f6" stroke-width="0.7"/><rect x="534.60" y="309.90" width="1.8" height="1.8" fill="#8a8a8a" stroke="#f6f6f6" stroke-width="0.7"/><text transform="translate(485.2 318.8) rotate(90)" text-anchor="middle" font-size="6.2" fill="#dcbfdc" stroke="#dcbfdc" stroke-width="0.12" textLength="68" lengthAdjust="spacingAndGlyphs">James Basic Tee- 10077</text><text transform="translate(479.5 317.7) rotate(90)" text-anchor="middle" font-size="6" fill="#dcbfdc" stroke="#dcbfdc" stroke-width="0.12" textLength="13.4" lengthAdjust="spacingAndGlyphs">Back</text><text transform="translate(474.4 317) rotate(90)" text-anchor="middle" font-size="6" fill="#dcbfdc" stroke="#dcbfdc" stroke-width="0.12" textLength="15" lengthAdjust="spacingAndGlyphs">Small</text><text transform="translate(469.4 315.9) rotate(90)" text-anchor="middle" font-size="6" fill="#dcbfdc" stroke="#dcbfdc" stroke-width="0.12" textLength="9.7" lengthAdjust="spacingAndGlyphs">Self</text><text transform="translate(463.8 315.9) rotate(90)" text-anchor="middle" font-size="6" fill="#dcbfdc" stroke="#dcbfdc" stroke-width="0.12" textLength="8.3" lengthAdjust="spacingAndGlyphs">(1)</text><text transform="translate(514.5 269.3) rotate(-90)" text-anchor="middle" font-size="6.2" font-weight="700" fill="#bb22bb" textLength="17.4" lengthAdjust="spacingAndGlyphs">Zone1</text><text x="527.8" y="228.2" font-size="6.2" fill="#c0aeea">2</text><text transform="translate(529.6 301.5) rotate(90)" font-size="4.6" fill="#e6b6e6">3</text></svg>
<div style="left:134.7px;top:470.3px;width:854.1px;height:2.5px;background:#6e6e6e;"></div>
<div style="left:988.8px;top:471.6px;width:11.2px;height:1.2px;background:#8c8c8c;"></div>
<div style="left:134.7px;top:472.7px;width:865.3px;height:14.6px;background:#aaaaaa;border-top:1px solid #b3b3b3;"></div>
<div style="left:134.7px;top:487.2px;width:865.3px;height:1.5px;background:#929292;"></div>
<div style="left:134.7px;top:488.7px;width:865.3px;height:0.9px;background:#fafafa;"></div>
<div style="left:134.7px;top:489.5px;width:865.3px;height:95.5px;background:#ebebeb;"></div>
<div style="left:135.2px;top:489.8px;width:30.80000000000001px;height:11.6px;background:#ececec;border:1px solid #5a5a5a;border-left-color:#fff;border-top-color:#fff;"></div>
<div style="left:169.5px;top:490.3px;width:24.30000000000001px;height:10.6px;background:#e3e3e3;border:0.6px solid #c6c6c6;"></div>
<div style="left:199.5px;top:490.3px;width:52.30000000000001px;height:10.6px;background:#e3e3e3;border:0.6px solid #c6c6c6;"></div>
<div style="left:257.5px;top:490.3px;width:51.30000000000001px;height:10.6px;background:#e3e3e3;border:0.6px solid #c6c6c6;"></div>
<div style="left:314.5px;top:490.3px;width:51.80000000000001px;height:10.6px;background:#e3e3e3;border:0.6px solid #c6c6c6;"></div>
<div style="left:371.2px;top:490.3px;width:51.80000000000001px;height:10.6px;background:#d2d2d2;border:0.6px solid #c8c8c8;"></div>
<div style="left:427px;top:490.3px;width:51.80000000000001px;height:10.6px;background:#d2d2d2;border:0.6px solid #c8c8c8;"></div>
<div style="left:135px;top:513.6px;width:321.6px;height:9.4px;background:#0a0a0a;"></div>
<div style="left:135px;top:503px;width:17.5px;height:10.5px;background:#ebebeb;border-top:0.7px solid #fdfdfd;border-left:0.8px solid #fdfdfd;border-right:1.1px solid #5e5e5e;border-bottom:0.9px solid #6a6a6a;"></div>
<div style="left:152.5px;top:503px;width:12.800000000000011px;height:10.5px;background:#ebebeb;border-top:0.7px solid #fdfdfd;border-left:0.8px solid #fdfdfd;border-right:1.1px solid #5e5e5e;border-bottom:0.9px solid #6a6a6a;"></div>
<div style="left:165.3px;top:503px;width:41.0px;height:10.5px;background:#ebebeb;border-top:0.7px solid #fdfdfd;border-left:0.8px solid #fdfdfd;border-right:1.1px solid #5e5e5e;border-bottom:0.9px solid #6a6a6a;"></div>
<div style="left:206.3px;top:503px;width:41.599999999999994px;height:10.5px;background:#ebebeb;border-top:0.7px solid #fdfdfd;border-left:0.8px solid #fdfdfd;border-right:1.1px solid #5e5e5e;border-bottom:0.9px solid #6a6a6a;"></div>
<div style="left:247.9px;top:503px;width:41.900000000000006px;height:10.5px;background:#ebebeb;border-top:0.7px solid #fdfdfd;border-left:0.8px solid #fdfdfd;border-right:1.1px solid #5e5e5e;border-bottom:0.9px solid #6a6a6a;"></div>
<div style="left:289.8px;top:503px;width:41.80000000000001px;height:10.5px;background:#ebebeb;border-top:0.7px solid #fdfdfd;border-left:0.8px solid #fdfdfd;border-right:1.1px solid #5e5e5e;border-bottom:0.9px solid #6a6a6a;"></div>
<div style="left:331.6px;top:503px;width:41.39999999999998px;height:10.5px;background:#ebebeb;border-top:0.7px solid #fdfdfd;border-left:0.8px solid #fdfdfd;border-right:1.1px solid #5e5e5e;border-bottom:0.9px solid #6a6a6a;"></div>
<div style="left:373px;top:503px;width:41.69999999999999px;height:10.5px;background:#ebebeb;border-top:0.7px solid #fdfdfd;border-left:0.8px solid #fdfdfd;border-right:1.1px solid #5e5e5e;border-bottom:0.9px solid #6a6a6a;"></div>
<div style="left:414.7px;top:503px;width:41.900000000000034px;height:10.5px;background:#ebebeb;border-top:0.7px solid #fdfdfd;border-left:0.8px solid #fdfdfd;border-right:1.1px solid #5e5e5e;border-bottom:0.9px solid #6a6a6a;"></div>
<div style="left:153.3px;top:514.5px;width:10.6px;height:8.1px;background:#dcfb3a;"></div>
<div style="left:151.5px;top:513.6px;width:1px;height:9.4px;background:#a8a8a8;"></div>
<div style="left:164.3px;top:513.6px;width:1px;height:9.4px;background:#a8a8a8;"></div>
<div style="left:205.3px;top:513.6px;width:1px;height:9.4px;background:#a8a8a8;"></div>
<div style="left:246.9px;top:513.6px;width:1px;height:9.4px;background:#a8a8a8;"></div>
<div style="left:288.8px;top:513.6px;width:1px;height:9.4px;background:#a8a8a8;"></div>
<div style="left:330.6px;top:513.6px;width:1px;height:9.4px;background:#a8a8a8;"></div>
<div style="left:372px;top:513.6px;width:1px;height:9.4px;background:#a8a8a8;"></div>
<div style="left:413.7px;top:513.6px;width:1px;height:9.4px;background:#a8a8a8;"></div>
<div style="left:455.6px;top:513.6px;width:1px;height:9.4px;background:#a8a8a8;"></div>
<div style="left:386px;top:517px;width:6.6px;height:4.8px;background:transparent;border-left:1.2px solid #d8d8d8;border-top:1.2px solid #d8d8d8;"></div>
<div style="left:137.7px;top:574.7px;width:7.4px;height:7.4px;background:#fff;border:0.7px solid #333;"></div>
<div style="left:254.2px;top:574.7px;width:7.4px;height:7.4px;background:#fff;border:0.7px solid #333;"></div>
<div style="left:352.3px;top:574.7px;width:7.4px;height:7.4px;background:#fff;border:0.7px solid #333;"></div>
<div style="left:132.4px;top:489.5px;width:1.9px;height:95px;background:#f4f4f4;"></div>
<div style="left:134.2px;top:489.5px;width:1.3px;height:95px;background:#4e4e4e;"></div>
<div style="left:0px;top:584.2px;width:1000px;height:1px;background:#b2b2b2;"></div>
<div style="left:0px;top:586px;width:1000px;height:13px;background:#f0f0f0;"></div>
<div style="left:0px;top:599px;width:1000px;height:2px;background:#2f7fd0;"></div>
<div style="left:751.5px;top:587px;width:97.0px;height:11.5px;background:#f0f0f0;border:0.6px solid #c8c8c8;"></div>
<div style="left:851.5px;top:587px;width:31.5px;height:11.5px;background:#f0f0f0;border:0.6px solid #c8c8c8;"></div>
<div style="left:885.5px;top:587px;width:59.5px;height:11.5px;background:#f0f0f0;border:0.6px solid #c8c8c8;"></div>
<div style="left:947.5px;top:587px;width:51.0px;height:11.5px;background:#f0f0f0;border:0.6px solid #c8c8c8;"></div>
<svg width="1000" height="601" viewBox="0 0 1000 601" font-family="Liberation Sans, sans-serif"><path d="M146.3 82.7h3.4q0.4 2.5 3.4 2.5t3.4-2.5h3.1q-0.6 5.6 1.4 8.1l-0.7 1.2l0.3 12.4h-14.7l0.3-12.4l-0.9-1.2q2.2-2.5 1-8.1z" fill="#434343" stroke="#1c1c1c" stroke-width="0.6" /><path d="M184.8 83.1l1.6-0.5q4.7 0.9 9.4 0l1.6 0.5q-0.4 5.3 2 7.7l-0.7 1.2v12.4h-15v-12.4l-0.5-1.2q2-2.4 1.6-7.7z" fill="#434343" stroke="#1c1c1c" stroke-width="0.6" /><path d="M226.2 87.8h3.6l4.2 3.4v4.4l-4.2 3.4h-3.6z" fill="#3b3b3d" /><path d="M260.4 93.3h14.4" fill="none" stroke="#151515" stroke-width="1.4" /><path d="M16.6 66v10" stroke="#2a5fc0" stroke-width="0.9" stroke-dasharray="0.9 0.9"/><path d="M137.6 65.6v10" stroke="#2a5fc0" stroke-width="0.9" stroke-dasharray="0.9 0.9"/><path d="M137.6 475.2v10" stroke="#2a5fc0" stroke-width="0.9" stroke-dasharray="0.9 0.9"/><path d="M3.5 18v7" stroke="#222" stroke-width="1" stroke-dasharray="1 1"/><path d="M4.5 19v7" stroke="#f6f6f6" stroke-width="1" stroke-dasharray="1 1"/><path d="M114.10000000000001 67.3h2.4v3.3h-2.4z" fill="#9a9a9a" stroke="#666" stroke-width="0.6"/><path d="M113.3 70.7h4M115.3 70.7v2.3" fill="none" stroke="#666" stroke-width="0.7"/><path d="M122.7 67.60000000000001l5.2 5.2m0 -5.2l-5.2 5.2" stroke="#333" stroke-width="1.1" fill="none"/><path d="M981.1999999999999 67.3h2.4v3.3h-2.4z" fill="#9a9a9a" stroke="#666" stroke-width="0.6"/><path d="M980.4 70.7h4M982.4 70.7v2.3" fill="none" stroke="#666" stroke-width="0.7"/><path d="M989.4 67.7l5.2 5.2m0 -5.2l-5.2 5.2" stroke="#333" stroke-width="1.1" fill="none"/><path d="M981.1999999999999 477.1h2.4v3.3h-2.4z" fill="#9a9a9a" stroke="#666" stroke-width="0.6"/><path d="M980.4 480.5h4M982.4 480.5v2.3" fill="none" stroke="#666" stroke-width="0.7"/><path d="M989.4 477.5l5.2 5.2m0 -5.2l-5.2 5.2" stroke="#333" stroke-width="1.1" fill="none"/><path d="M992.0 84.39999999999999l2.2 -2.2l2.2 2.2" fill="none" stroke="#444" stroke-width="1.2"/><path d="M992.0 119.30000000000001l2.2 2.2l2.2 -2.2" fill="none" stroke="#444" stroke-width="1.2"/><path d="M992.0 142.7l2.2 -2.2l2.2 2.2" fill="none" stroke="#444" stroke-width="1.2"/><path d="M992.0 465.7l2.2 2.2l2.2 -2.2" fill="none" stroke="#444" stroke-width="1.2"/><path d="M124.2 193.3h4.4l-2.2-2.6z" fill="#9a9a9a"/><path d="M124.2 518.3h4.4l-2.2 2.6z" fill="#9a9a9a"/><g transform="translate(20.60 205.70)"><path d="M-5 4.6v-6l1.8-2.6l1.4 1.4v7.2z M0 4.6v-7.2l1.6-2.2l1.2 1.4l1.8-1v9z" fill="#f6f6f6" stroke="#a8a8a8" stroke-width="0.8" /><path d="M0.4 0.4h3M1.6 -0.8l-1.4 1.2l1.4 1.2" fill="none" stroke="#a8a8a8" stroke-width="0.6" /></g><g transform="translate(20.60 219.00)"><g transform="translate(1.40 0.00)"><path d="M-3.4 4.6v-6l1.6-2.2l1.4 1.2l1.6-2.4l2.6 3.2v6.2z" fill="#f4f8fe" stroke="#2a63b8" stroke-width="0.9" /></g><path d="M-5.4 -2.6L-1.2 1.4M-5.4 2.6L-1.2 -1.4" fill="none" stroke="#5a2e0c" stroke-width="1.1" /><circle cx="-4.8" cy="-2.8" r="0.9" fill="#8a4a16"/><circle cx="-4.8" cy="2.8" r="0.9" fill="#8a4a16"/></g><g transform="translate(20.60 234.50)"><g transform="translate(1.40 0.00)"><path d="M-3.4 4.6v-6l1.6-2.2l1.4 1.2l1.6-2.4l2.6 3.2v6.2z" fill="#f4f8fe" stroke="#2a63b8" stroke-width="0.9" /></g><path d="M1 -2.4q2.4 2.4 0 5.4" fill="none" stroke="#2a63b8" stroke-width="0.7" /><circle cx="2.8" cy="-3" r="0.9" fill="#e03030"/><circle cx="3" cy="3.2" r="0.8" fill="#e03030"/><path d="M-5.4 -2.6L-1.2 1.4M-5.4 2.6L-1.2 -1.4" fill="none" stroke="#5a2e0c" stroke-width="1.1" /><circle cx="-4.8" cy="-2.8" r="0.9" fill="#8a4a16"/><circle cx="-4.8" cy="2.8" r="0.9" fill="#8a4a16"/></g><g transform="translate(20.60 252.80)"><path d="M-5 4.6v-5.6l2.6-3l2.4 3.4l2.4-3.4l0.6 0.4l2 2.6v5.6z" fill="#f4f8fe" stroke="#2a63b8" stroke-width="0.9" /><path d="M0 -0.6v5" fill="none" stroke="#2a63b8" stroke-width="0.6" /></g><g transform="translate(20.60 265.60)"><path d="M-4 4.6v-5.8l1.8-2.2l1 1l2-2.6l2.2 0.6" fill="none" stroke="#2a63b8" stroke-width="0.9" /><path d="M-4 4.6h7" fill="none" stroke="#2a63b8" stroke-width="0.9" /><path d="M-1.6 4.4v-3h2.6v3" fill="none" stroke="#2a63b8" stroke-width="0.7" /><path d="M3.6 -5v10" fill="none" stroke="#2f9a5c" stroke-width="0.8" stroke-dasharray="2 0.8"/></g><g transform="translate(20.60 278.60)"><path d="M-4.4 -5v9.6h9.4" fill="none" stroke="#163f86" stroke-width="1.3" /><path d="M-2.6 -4.6v7.4h7.4" fill="none" stroke="#8fb0e8" stroke-width="0.8" /><path d="M4.4 -3.8l-4 3.6" fill="none" stroke="#1c9a2e" stroke-width="1" /><path d="M-0.6 1v-2.8l2.8 2.8z" fill="#1c9a2e" /></g><g transform="translate(20.60 291.80)"><path d="M-4.6 -4.6h6.6v6.6h-6.6z" fill="#fff" stroke="#e03030" stroke-width="0.9" /><path d="M-1.6 -1.6h6.4v6.4h-6.4z" fill="#fff" stroke="#2a63b8" stroke-width="0.9" /><path d="M0 2.6h3.4M2.2 1.4l1.4 1.2l-1.4 1.2" fill="none" stroke="#2a63b8" stroke-width="0.7" /></g><g transform="translate(20.60 304.80)"><path d="M-0.8 4.8v-6.4l2-2.2l3.2 3v5.6z" fill="#f4f8fe" stroke="#2a63b8" stroke-width="0.9" /><path d="M-5.4 -3.6h5.6v1.6h-5.6z" fill="#6a3a10" /><path d="M-2.6 -2.2v7" fill="none" stroke="#a5561a" stroke-width="1.2" /></g><g transform="translate(20.60 318.00)"><g transform="translate(-0.60 0.00)"><path d="M-3.4 4.6v-6l1.6-2.2l1.4 1.2l1.6-2.4l2.6 3.2v6.2z" fill="#f4f8fe" stroke="#2a63b8" stroke-width="0.9" /></g><g transform="translate(2.60 0.60)"><circle cx="0" cy="0" r="1.5" fill="#fff" stroke="#d07a1a" stroke-width="1.1"/><path d="M-2.8 0h5.6M0 -2.8v5.6M-2 -2l4 4M2 -2l-4 4" stroke="#d07a1a" stroke-width="0.6"/></g></g><g transform="translate(20.60 331.20)"><path d="M-5 4.6v-5.8l2.4-3.4h4.8l2.6 3.4v5.8z" fill="#f4f8fe" stroke="#2a63b8" stroke-width="0.9" /><path d="M-2.4 -4.4v9M2.2 -4.4v9" fill="none" stroke="#2a63b8" stroke-width="0.6" /><path d="M0 -2.6v6" fill="none" stroke="#e03030" stroke-width="0.8" /><path d="M0 -3.8l1.2 1.6h-2.4zM0 4.4l1.2-1.6h-2.4z" fill="#e03030" /></g><g transform="translate(20.60 344.30)"><path d="M-5 4.6v-5.8l2.2-3.2l1.6 1.2l2.2-1.6l3.6 3.4v6z" fill="#f4f8fe" stroke="#2a63b8" stroke-width="0.9" /><path d="M1 -2.6q2.4 2 0.6 4t0.8 3.2" fill="none" stroke="#2a63b8" stroke-width="0.8" /><path d="M-2.6 -1v5" fill="none" stroke="#a5561a" stroke-width="0.9" /><circle cx="-2.6" cy="-2" r="1.2" fill="none" stroke="#2a63b8" stroke-width="0.7"/></g><g transform="translate(20.60 357.50)"><path d="M-5 4.6v-5.8l2.2-3l1.6 1.4l2.2-1.6" fill="none" stroke="#2a63b8" stroke-width="0.9" /><path d="M-5 4.6h8.6v-4" fill="none" stroke="#2a63b8" stroke-width="0.9" /><g transform="translate(-0.40 1.00)"><circle cx="0" cy="0" r="1.5" fill="#fff" stroke="#d07a1a" stroke-width="1.1"/><path d="M-2.8 0h5.6M0 -2.8v5.6M-2 -2l4 4M2 -2l-4 4" stroke="#d07a1a" stroke-width="0.6"/></g><path d="M0.8 -0.6L5 -5" fill="none" stroke="#8a4a16" stroke-width="1" /></g><g transform="translate(20.60 370.50)"><path d="M-5 4.6v-5.6l2.4-3.2l2.6 1.6l2.4-1.6l2.6 3.2v5.6z" fill="#eef4fd" stroke="#2a63b8" stroke-width="0.9" /><path d="M-2 -1v5.6M1.8 -1v5.6" fill="none" stroke="#2a63b8" stroke-width="0.6" /><path d="M-1.2 -1.6h3.6M-0.2 -2.8l-1.4 1.2l1.4 1.2" fill="none" stroke="#1c9a2e" stroke-width="0.9" /><circle cx="-3.4" cy="1" r="0.7" fill="#e03030"/><circle cx="-3.4" cy="3.4" r="0.7" fill="#e03030"/><circle cx="3.4" cy="1" r="0.7" fill="#e03030"/><circle cx="3.4" cy="3.4" r="0.7" fill="#e03030"/><circle cx="0" cy="3.6" r="0.7" fill="#e03030"/></g><g transform="translate(20.60 384.20)"><path d="M-4.8 -5v10.4M4.8 -5v10.4" fill="none" stroke="#163f86" stroke-width="1.1" /><path d="M-4.6 5.2h9.2" fill="none" stroke="#d8e4f8" stroke-width="0.7" /><path d="M-1.1 -5h2.2v2.2h-2.2z" fill="#b0651c" /><path d="M0 -2.8q2.8 2.2 1.7 5.6l-1.7 1.8l-1.7-1.8q-1.1-3.4 1.7-5.6z" fill="#f6ead8" stroke="#8a4a16" stroke-width="0.8" /></g><rect x="673.2" y="585.6" width="15.4" height="13.4" fill="#d6d6d6"/><rect x="688.6" y="585.6" width="16.2" height="13.4" fill="#f3f3f3"/><rect x="704.8" y="585.6" width="14.8" height="13.4" fill="#a9c7fb"/><rect x="719.6" y="585.6" width="15.2" height="13.4" fill="#fafafa"/><rect x="734.8" y="585.6" width="15.4" height="13.4" fill="#e2e2e2"/><path d="M674.6 587L687 598.6" fill="none" stroke="#111" stroke-width="1.4" /><path d="M673.6 586l3.4 0.6l-2.8 2.8zM688 599.6l-3.4-0.6l2.8-2.8z" fill="#111" /><text x="682" y="591.6" font-size="4" fill="#333" transform="rotate(45 682 591.6)">10</text><path d="M690 597h13v1.7h-13z" fill="#fff" stroke="#111" stroke-width="0.8" /><path d="M690.8 590.6q0-3.4 3.2-3.4h8.2v9.4h-2.8v-5.8h-3.4v1.6q0 1.4-1.6 1.4h-1.2q-2.4 0-2.4-3.2z" fill="#fff" stroke="#111" stroke-width="1" /><path d="M705.6 585.8L719 599" fill="none" stroke="#7fb0f8" stroke-width="0.9" /><circle cx="708.4" cy="589.4" r="1.3" fill="#f01818" stroke="#7fe8e0" stroke-width="0.5"/><circle cx="712.4" cy="593.4" r="1.3" fill="#f01818" stroke="#7fe8e0" stroke-width="0.5"/><circle cx="716.3" cy="597.2" r="1.3" fill="#f01818" stroke="#7fe8e0" stroke-width="0.5"/><path d="M720 586.6q11.4-1.6 14 12.4" fill="none" stroke="#111" stroke-width="1" /><path d="M720.4 592.6q6.6-0.6 8.8 6.4" fill="none" stroke="#111" stroke-width="1" /><ellipse cx="728.4" cy="591" rx="1.5" ry="1" fill="none" stroke="#111" stroke-width="0.6" transform="rotate(40 728.4 591)"/><path d="M736 588h9M736 590.2h7M736 592.4h5" fill="none" stroke="#666" stroke-width="0.9" /><path d="M747.4 587v12M744.2 590v9M741.6 593.6v5.4" fill="none" stroke="#333" stroke-width="0.9" /><path d="M745.6 589.4l3.6-2.8M742 593.6l5.4-4.4" fill="none" stroke="#111" stroke-width="1.3" /><circle cx="741.8" cy="594.4" r="1" fill="#111"/><circle cx="745" cy="591" r="0.9" fill="#111"/><path d="M139 578.4l1.8 1.9l3.1-4" fill="none" stroke="#111" stroke-width="0.8" /></svg>
<div style="left:0px;top:0px;width:1.05px;height:601px;background:#4a9fe6;"></div>
<div style="left:998.8px;top:0px;width:1.2px;height:601px;background:#4a9fe6;"></div>
<span style="left:15.00px;top:4.20px;font-size:7.0px;line-height:8.4px;color:#000;font-weight:400;transform:scaleX(0.9392);">Basic Tee.PDS - Optitex PDS 18</span>
<span style="left:10.50px;top:19.00px;font-size:7.0px;line-height:8.4px;color:#111;font-weight:400;transform:scaleX(0.9309);">File</span>
<span style="left:32.00px;top:19.00px;font-size:7.0px;line-height:8.4px;color:#111;font-weight:400;transform:scaleX(0.9949);">Edit</span>
<span style="left:55.00px;top:19.00px;font-size:7.0px;line-height:8.4px;color:#111;font-weight:400;transform:scaleX(0.9138);">Piece</span>
<span style="left:82.50px;top:19.00px;font-size:7.0px;line-height:8.4px;color:#111;font-weight:400;transform:scaleX(0.9838);">Grading</span>
<span style="left:118.00px;top:19.00px;font-size:7.0px;line-height:8.4px;color:#111;font-weight:400;transform:scaleX(0.9638);">Design</span>
<span style="left:150.00px;top:19.00px;font-size:7.0px;line-height:8.4px;color:#111;font-weight:400;transform:scaleX(0.8940);">3D</span>
<span style="left:169.50px;top:19.00px;font-size:7.0px;line-height:8.4px;color:#111;font-weight:400;transform:scaleX(1.0097);">Tools</span>
<span style="left:197.00px;top:19.00px;font-size:7.0px;line-height:8.4px;color:#111;font-weight:400;">View</span>
<span style="left:223.00px;top:19.00px;font-size:7.0px;line-height:8.4px;color:#111;font-weight:400;transform:scaleX(1.0514);">O/Cloud</span>
<span style="left:261.00px;top:19.00px;font-size:7.0px;line-height:8.4px;color:#111;font-weight:400;transform:scaleX(1.0419);">Help</span>
<span style="left:10.40px;top:68.60px;font-size:7.0px;line-height:8.4px;color:#6a6a6a;font-weight:400;transform:rotate(90deg) scaleX(1.0452);transform-origin:0 0;">Shader Manager</span>
<span style="left:10.40px;top:138.80px;font-size:7.0px;line-height:8.4px;color:#6a6a6a;font-weight:400;transform:rotate(90deg) scaleX(1.0865);transform-origin:0 0;">3D Properties</span>
<span style="left:22.20px;top:67.16px;font-size:7.4px;line-height:8.88px;color:#4a4a4a;font-weight:700;transform:scaleX(1.0750);">Toolbox</span>
<span style="left:19.00px;top:82.10px;font-size:7.0px;line-height:8.4px;color:#fff;font-weight:400;transform:scaleX(1.0174);">Tool...</span>
<span style="left:47.00px;top:82.10px;font-size:7.0px;line-height:8.4px;color:#ececec;font-weight:400;transform:scaleX(0.9766);">Inter...</span>
<span style="left:76.00px;top:82.10px;font-size:7.0px;line-height:8.4px;color:#ececec;font-weight:400;transform:scaleX(0.9638);">View ...</span>
<span style="left:105.00px;top:82.10px;font-size:7.0px;line-height:8.4px;color:#ececec;font-weight:400;transform:scaleX(0.9768);">Piec...</span>
<span style="left:18.50px;top:93.30px;font-size:7.0px;line-height:8.4px;color:#0c0c0c;font-weight:400;transform:scaleX(1.0119);">My Favorite Tools</span>
<span style="left:18.50px;top:105.20px;font-size:7.0px;line-height:8.4px;color:#0c0c0c;font-weight:400;transform:scaleX(1.0282);">Windows Tools</span>
<span style="left:18.50px;top:117.10px;font-size:7.0px;line-height:8.4px;color:#0c0c0c;font-weight:400;transform:scaleX(0.9725);">General Tools</span>
<span style="left:18.50px;top:129.00px;font-size:7.0px;line-height:8.4px;color:#0c0c0c;font-weight:400;transform:scaleX(0.9665);">Update Pieces</span>
<span style="left:18.50px;top:140.90px;font-size:7.0px;line-height:8.4px;color:#0c0c0c;font-weight:400;transform:scaleX(1.0586);">Import</span>
<span style="left:18.50px;top:152.80px;font-size:7.0px;line-height:8.4px;color:#0c0c0c;font-weight:400;transform:scaleX(1.0337);">Points &amp; Notches</span>
<span style="left:18.50px;top:164.70px;font-size:7.0px;line-height:8.4px;color:#0c0c0c;font-weight:400;transform:scaleX(1.0557);">Movement</span>
<span style="left:18.50px;top:176.60px;font-size:7.0px;line-height:8.4px;color:#0c0c0c;font-weight:400;transform:scaleX(1.0356);">Rotation</span>
<span style="left:18.50px;top:188.50px;font-size:7.0px;line-height:8.4px;color:#0c0c0c;font-weight:400;transform:scaleX(1.0566);">Build &amp; Cut</span>
<span style="left:30.00px;top:202.70px;font-size:7.0px;line-height:8.4px;color:#9a9a9a;font-weight:400;transform:scaleX(0.9259);">Join Pieces (J)</span>
<span style="left:30.00px;top:215.70px;font-size:7.0px;line-height:8.4px;color:#0c0c0c;font-weight:400;transform:scaleX(0.9760);">Cut Piece (C)</span>
<span style="left:30.00px;top:228.70px;font-size:7.0px;line-height:8.4px;color:#0c0c0c;font-weight:400;transform:scaleX(1.0068);">Cut Piece Along Internal</span>
<span style="left:30.00px;top:237.70px;font-size:7.0px;line-height:8.4px;color:#0c0c0c;font-weight:400;transform:scaleX(1.0401);">(Ctrl+Shift+C)</span>
<span style="left:30.00px;top:249.30px;font-size:7.0px;line-height:8.4px;color:#0c0c0c;font-weight:400;transform:scaleX(1.0241);">Fold Out (Ctrl+Shift+F)</span>
<span style="left:30.00px;top:262.20px;font-size:7.0px;line-height:8.4px;color:#0c0c0c;font-weight:400;">Fold In (Shift+F)</span>
<span style="left:30.00px;top:275.20px;font-size:7.0px;line-height:8.4px;color:#0c0c0c;font-weight:400;transform:scaleX(1.0407);">Fold onto Point</span>
<span style="left:30.00px;top:288.40px;font-size:7.0px;line-height:8.4px;color:#0c0c0c;font-weight:400;">Fold Line to Line</span>
<span style="left:30.00px;top:301.40px;font-size:7.0px;line-height:8.4px;color:#0c0c0c;font-weight:400;transform:scaleX(0.9720);">Build Piece (B)</span>
<span style="left:30.00px;top:314.70px;font-size:7.0px;line-height:8.4px;color:#0c0c0c;font-weight:400;transform:scaleX(0.9826);">Trace Segments (Ctrl+B)</span>
<span style="left:30.00px;top:327.90px;font-size:7.0px;line-height:8.4px;color:#0c0c0c;font-weight:400;transform:scaleX(0.9947);">Trace Piece (Ctrl+Shift+B)</span>
<span style="left:30.00px;top:340.90px;font-size:7.0px;line-height:8.4px;color:#0c0c0c;font-weight:400;transform:scaleX(1.0269);">Build Zone (Ctrl+Shift+Z)</span>
<span style="left:30.00px;top:354.20px;font-size:7.0px;line-height:8.4px;color:#0c0c0c;font-weight:400;transform:scaleX(0.9921);">Trace Zone (Shift+Z)</span>
<span style="left:30.00px;top:367.10px;font-size:7.0px;line-height:8.4px;color:#0c0c0c;font-weight:400;transform:scaleX(0.9854);">Swap zone segment</span>
<span style="left:30.00px;top:380.70px;font-size:7.0px;line-height:8.4px;color:#0c0c0c;font-weight:400;transform:scaleX(1.0130);">Draft Zone</span>
<span style="left:18.50px;top:515.70px;font-size:7.0px;line-height:8.4px;color:#0c0c0c;font-weight:400;transform:scaleX(1.0641);">Contour</span>
<span style="left:18.50px;top:527.65px;font-size:7.0px;line-height:8.4px;color:#0c0c0c;font-weight:400;transform:scaleX(0.9570);">Seam</span>
<span style="left:18.50px;top:539.60px;font-size:7.0px;line-height:8.4px;color:#0c0c0c;font-weight:400;transform:scaleX(0.9835);">Darts &amp; Pleats</span>
<span style="left:18.50px;top:551.55px;font-size:7.0px;line-height:8.4px;color:#0c0c0c;font-weight:400;transform:scaleX(1.0241);">Half Symmetry</span>
<span style="left:18.50px;top:563.50px;font-size:7.0px;line-height:8.4px;color:#0c0c0c;font-weight:400;transform:scaleX(0.9683);">Baseline</span>
<span style="left:18.50px;top:575.45px;font-size:7.0px;line-height:8.4px;color:#0c0c0c;font-weight:400;transform:scaleX(1.0072);">Grading Tools</span>
<span style="left:142.60px;top:67.06px;font-size:7.4px;line-height:8.88px;color:#4a4a4a;font-weight:700;transform:scaleX(1.0887);">Pieces Window</span>
<span style="left:146.05px;top:110.86px;font-size:5.9px;line-height:7.08px;color:#0c0c0c;font-weight:400;transform:scaleX(1.0546);">Front</span>
<span style="left:185.00px;top:110.96px;font-size:5.9px;line-height:7.08px;color:#fff;font-weight:400;transform:scaleX(0.9927);">Back</span>
<span style="left:222.75px;top:110.86px;font-size:5.9px;line-height:7.08px;color:#0c0c0c;font-weight:400;transform:scaleX(0.9817);">Right</span>
<span style="left:220.25px;top:117.86px;font-size:5.9px;line-height:7.08px;color:#0c0c0c;font-weight:400;transform:scaleX(1.0271);">Sleeve</span>
<span style="left:261.00px;top:110.86px;font-size:5.9px;line-height:7.08px;color:#0c0c0c;font-weight:400;transform:scaleX(0.9686);">Neck</span>
<span style="left:257.00px;top:117.86px;font-size:5.9px;line-height:7.08px;color:#0c0c0c;font-weight:400;transform:scaleX(1.0687);">Binding</span>
<span style="left:142.60px;top:476.76px;font-size:7.4px;line-height:8.88px;color:#4a4a4a;font-weight:700;transform:scaleX(1.0701);">Map Pieces Zones - Back</span>
<span style="left:142.50px;top:492.30px;font-size:7.0px;line-height:8.4px;color:#111;font-weight:400;transform:scaleX(0.9252);">Menu</span>
<span style="left:174.70px;top:492.30px;font-size:7.0px;line-height:8.4px;color:#111;font-weight:400;transform:scaleX(0.9401);">Lock</span>
<span style="left:203.45px;top:492.30px;font-size:7.0px;line-height:8.4px;color:#111;font-weight:400;transform:scaleX(0.9056);">Define Internals</span>
<span style="left:262.95px;top:492.30px;font-size:7.0px;line-height:8.4px;color:#111;font-weight:400;transform:scaleX(0.9189);">Remove Zone</span>
<span style="left:321.95px;top:492.30px;font-size:7.0px;line-height:8.4px;color:#111;font-weight:400;transform:scaleX(0.9119);">Create Piece</span>
<span style="left:372.35px;top:492.30px;font-size:7.0px;line-height:8.4px;color:#a6a6a6;font-weight:400;transform:scaleX(0.9153);">Disconnect Piece</span>
<span style="left:429.95px;top:492.30px;font-size:7.0px;line-height:8.4px;color:#a6a6a6;font-weight:400;transform:scaleX(0.8871);">Correct Internals</span>
<span style="left:177.20px;top:504.90px;font-size:7.0px;line-height:8.4px;color:#111;font-weight:400;transform:scaleX(0.8890);">Name</span>
<span style="left:219.45px;top:504.90px;font-size:7.0px;line-height:8.4px;color:#111;font-weight:400;transform:scaleX(0.8784);">Code</span>
<span style="left:253.05px;top:504.90px;font-size:7.0px;line-height:8.4px;color:#111;font-weight:400;transform:scaleX(0.8854);">Description</span>
<span style="left:298.65px;top:504.90px;font-size:7.0px;line-height:8.4px;color:#111;font-weight:400;transform:scaleX(0.9439);">Material</span>
<span style="left:340.05px;top:504.90px;font-size:7.0px;line-height:8.4px;color:#111;font-weight:400;transform:scaleX(0.9168);">Quantity</span>
<span style="left:388.05px;top:504.90px;font-size:7.0px;line-height:8.4px;color:#111;font-weight:400;transform:scaleX(0.8837);">Pair</span>
<span style="left:422.80px;top:504.90px;font-size:7.0px;line-height:8.4px;color:#111;font-weight:400;transform:scaleX(0.8959);">Opposite</span>
<span style="left:142.10px;top:515.60px;font-size:7.0px;line-height:8.4px;color:#fff;font-weight:400;transform:scaleX(0.7192);">1</span>
<span style="left:175.95px;top:515.60px;font-size:7.0px;line-height:8.4px;color:#fff;font-weight:400;transform:scaleX(0.9321);">Zone1</span>
<span style="left:220.00px;top:515.60px;font-size:7.0px;line-height:8.4px;color:#fff;font-weight:400;transform:scaleX(0.9253);">Back</span>
<span style="left:305.25px;top:515.60px;font-size:7.0px;line-height:8.4px;color:#fff;font-weight:400;transform:scaleX(0.8705);">Self</span>
<span style="left:350.60px;top:515.60px;font-size:7.0px;line-height:8.4px;color:#fff;font-weight:400;transform:scaleX(0.7192);">1</span>
<span style="left:428.65px;top:515.60px;font-size:7.0px;line-height:8.4px;color:#fff;font-weight:400;transform:scaleX(0.9143);">None</span>
<span style="left:147.50px;top:575.30px;font-size:7.0px;line-height:8.4px;color:#111;font-weight:400;transform:scaleX(0.8884);">Filling Current Piece by Zone Name</span>
<span style="left:263.80px;top:575.30px;font-size:7.0px;line-height:8.4px;color:#111;font-weight:400;transform:scaleX(0.8978);">Filling Selected Zones Only</span>
<span style="left:362.00px;top:575.30px;font-size:7.0px;line-height:8.4px;color:#111;font-weight:400;transform:scaleX(0.9090);">Show Internals of Selected Zones Only</span>
<span style="left:3.00px;top:589.90px;font-size:7.0px;line-height:8.4px;color:#111;font-weight:400;transform:scaleX(1.0053);">Draft Zone Contour on Current Piece</span>
<span style="left:860.20px;top:589.90px;font-size:7.0px;line-height:8.4px;color:#111;font-weight:400;transform:scaleX(0.8780);">SEW</span>
<span style="left:957.00px;top:589.90px;font-size:7.0px;line-height:8.4px;color:#111;font-weight:400;transform:scaleX(0.9915);">CM - sq.m</span>
</div></body></html>
